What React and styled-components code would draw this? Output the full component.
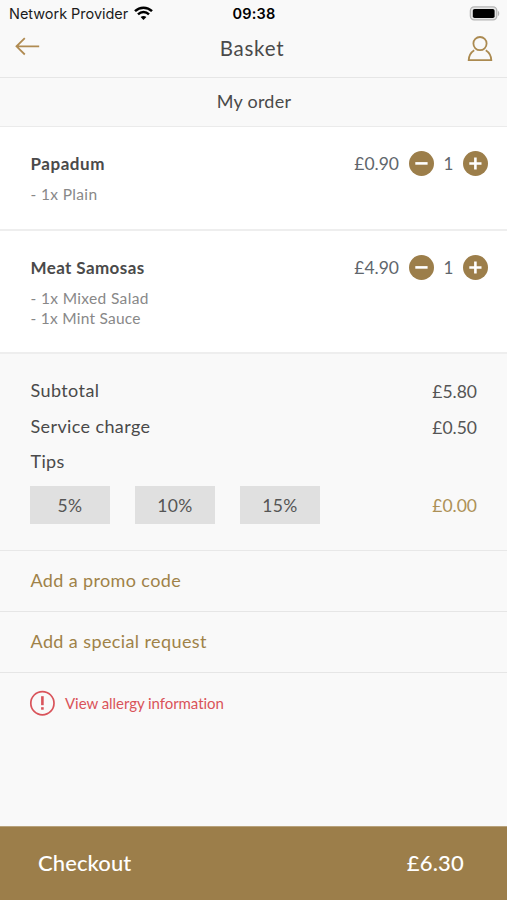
import React, { useState } from 'react';
import styled, { createGlobalStyle } from 'styled-components';

const GlobalStyle = createGlobalStyle`
  * {
    box-sizing: border-box;
  }

  body {
    margin: 0;
    background: #f9f9f9;
    font-family: Lato, 'Open Sans', sans-serif;
    font-variant-ligatures: none;
    color: #4a4a4a;
  }

  button {
    border: none;
    padding: 0;
    background: none;
    font-family: inherit;
    font-variant-ligatures: none;
    color: inherit;
    cursor: pointer;
  }
`;

const Screen = styled.div`
  display: flex;
  flex-direction: column;
  width: 507px;
  height: 900px;
  overflow: hidden;
  background: #f9f9f9;
`;

const StatusBar = styled.div`
  display: grid;
  grid-template-columns: 1fr auto 1fr;
  align-items: center;
  height: 27px;
  padding: 0 7px 0 9px;
  font-family: Inter, sans-serif;
  color: #1c1c1c;
`;

const Carrier = styled.div`
  display: flex;
  align-items: center;
  gap: 6px;
  font-size: 14.5px;
  letter-spacing: -0.03px;
  white-space: nowrap;
`;

const Clock = styled.div`
  padding-right: 1px;
  font-size: 14.5px;
  font-weight: 600;
  letter-spacing: 0.2px;
  color: #000;
`;

const Battery = styled.svg`
  justify-self: end;
`;

const Header = styled.header`
  display: grid;
  grid-template-columns: 40px 1fr 40px;
  align-items: center;
  height: 51px;
  padding: 0 14px 9px 14px;
  border-bottom: 1px solid #e6e6e6;
`;

const Title = styled.h1`
  margin: 0;
  padding-right: 3px;
  font-size: 20.5px;
  font-weight: 400;
  line-height: 26px;
  letter-spacing: 0.75px;
  text-align: center;
`;

const IconButton = styled.button`
  display: flex;
  justify-content: ${props => props.$align || 'flex-start'};
  padding-bottom: ${props => props.$lift || 0}px;
`;

const SectionTitle = styled.h2`
  height: 49px;
  margin: 0;
  padding-left: 1px;
  border-bottom: 1px solid #ebebeb;
  font-size: 18px;
  font-weight: 400;
  line-height: 46px;
  letter-spacing: 0.25px;
  text-align: center;
`;

const OrderItem = styled.div`
  display: flex;
  justify-content: space-between;
  align-items: flex-start;
  height: ${props => props.$height}px;
  padding: 24px 19px 0 30.5px;
  background: #fff;
  border-bottom: 2px solid #eee;
`;

const ItemName = styled.div`
  font-size: 17px;
  font-weight: 700;
  line-height: 26px;
  letter-spacing: ${props => props.$spacing}px;
`;

const ItemOptions = styled.div`
  margin-top: 8px;
  font-size: 15.5px;
  line-height: 19.5px;
  color: #888;
`;

const Option = styled.div`
  letter-spacing: ${props => props.$spacing}px;
`;

const Stepper = styled.div`
  display: flex;
  align-items: center;
  height: 25px;
`;

const ItemPrice = styled.span`
  margin-right: 10px;
  font-size: 17.5px;
  color: #60666c;
`;

const Quantity = styled.span`
  width: 29px;
  font-size: 17px;
  text-align: center;
  color: #60666c;
`;

const RoundButton = styled.button`
  display: flex;
  width: 25px;
  height: 25px;
  border-radius: 50%;
  background: #9c7e4a;
`;

const Summary = styled.section`
  height: 197px;
  padding: 19px 30px 0;
  border-bottom: 1px solid #e8e8e8;
`;

const SummaryRow = styled.div`
  display: flex;
  justify-content: space-between;
  height: 35.5px;
  font-size: 18px;
  line-height: 35px;
`;

const Label = styled.span`
  padding-left: 0.5px;
  letter-spacing: ${props => props.$spacing}px;
`;

const Amount = styled.span`
  padding-top: ${props => props.$drop || 0}px;
  font-size: 17.5px;
  color: ${props => (props.$accent ? '#ad9157' : '#555')};
`;

const TipsRow = styled.div`
  display: flex;
  align-items: center;
  justify-content: space-between;
  margin-top: 6px;
`;

const TipOptions = styled.div`
  display: flex;
  gap: 25px;
`;

const TipButton = styled.button`
  width: 80px;
  height: 38px;
  padding-top: 1px;
  background: ${props => (props.$active ? '#cfc1a4' : '#e0e0e0')};
  font-size: 17.5px;
  letter-spacing: 0.4px;
  color: #555;
`;

const LinkRow = styled.button`
  height: 61px;
  padding: 0 30.5px 3px;
  border-bottom: 1px solid #e6e6e6;
  font-size: 18px;
  letter-spacing: ${props => props.$spacing}px;
  text-align: left;
  color: #9f8248;
`;

const AllergyLink = styled.button`
  display: flex;
  align-items: center;
  align-self: flex-start;
  gap: 10px;
  margin: 17px 0 0 29px;
  font-size: 15px;
  letter-spacing: -0.05px;
  color: #d9535a;
`;

const Checkout = styled.button`
  display: flex;
  justify-content: space-between;
  align-items: center;
  height: 74px;
  margin-top: auto;
  padding: 0 43px 2px 38px;
  border-top: 1px solid #b8a27c;
  background: #9c7e4a;
  font-size: 22px;
  font-weight: 500;
  color: #fff;
`;

const CheckoutText = styled.span`
  letter-spacing: ${props => props.$spacing}px;
`;

const WifiIcon = () => (
  <svg width="19" height="15" viewBox="0 0 19 15">
    <path d="M1 5.1C5.8.5 13.2.5 18 5.1" fill="none" stroke="#000" strokeWidth="2.5" />
    <path d="M4 8.3C7.2 5.3 11.8 5.3 15 8.3" fill="none" stroke="#000" strokeWidth="2.5" />
    <path d="M6.6 11C8.3 9.5 10.7 9.5 12.4 11L9.5 14Z" fill="#000" />
  </svg>
);

const BatteryIcon = () => (
  <Battery width="31" height="15" viewBox="0 0 31 15">
    <rect x="1.4" y="0.9" width="26.4" height="13" rx="3.8" fill="#e6e6e6" stroke="#b5b5b5" strokeWidth="1.3" />
    <rect x="3.8" y="3" width="21.8" height="9" rx="1.8" fill="#000" />
    <path d="M29 5C30.7 5.6 30.7 9.4 29 10Z" fill="#b5b5b5" />
  </Battery>
);

const BackIcon = () => (
  <svg width="26" height="20" viewBox="0 0 26 20" fill="none" stroke="#b08b52" strokeWidth="1.8">
    <path d="M25.2 10.3H2.5M10.8 2.1L2.5 10.3L10.8 18.5" />
  </svg>
);

const UserIcon = () => (
  <svg width="26" height="27" viewBox="0 0 26 27" fill="none" stroke="#ab8a50" strokeWidth="1.8">
    <circle cx="13" cy="9.6" r="6.6" />
    <path d="M7.2 16.3C4 18.4 1.9 21.7 1.7 26.1H24.3C24.1 21.7 22 18.4 18.8 16.3" />
  </svg>
);

const MinusIcon = () => (
  <svg width="25" height="25" viewBox="0 0 25 25" stroke="#fff" strokeWidth="2.6">
    <path d="M6.3 12.4H18.6" />
  </svg>
);

const PlusIcon = () => (
  <svg width="25" height="25" viewBox="0 0 25 25" stroke="#fff" strokeWidth="2.6">
    <path d="M6.3 12.5H18.5M12.4 6.4V18.6" />
  </svg>
);

const AlertIcon = () => (
  <svg width="26" height="26" viewBox="0 0 26 26" fill="none" stroke="#d9535a">
    <circle cx="13.4" cy="13.2" r="11.6" strokeWidth="1.7" />
    <path d="M13.4 6.2V15.2" strokeWidth="2.6" />
    <path d="M13.4 17.2V19.7" strokeWidth="2.6" />
  </svg>
);

const items = [
  { name: 'Papadum', price: 0.9, height: 104, spacing: 0.55, options: [{ text: '- 1x Plain', spacing: 0.35 }] },
  {
    name: 'Meat Samosas',
    price: 4.9,
    height: 123,
    spacing: 0.4,
    options: [
      { text: '- 1x Mixed Salad', spacing: 0.35 },
      { text: '- 1x Mint Sauce', spacing: 0.25 }
    ]
  }
];

const SERVICE_CHARGE = 0.5;

const formatPrice = value => `£${value.toFixed(2)}`;

const App = () => {
  const [quantities, setQuantities] = useState([1, 1]);
  const [tip, setTip] = useState(0);

  const subtotal = items.reduce((sum, item, i) => sum + item.price * quantities[i], 0);
  const tipAmount = (subtotal * tip) / 100;

  const changeQuantity = (index, step) => {
    setQuantities(quantities.map((q, i) => (i === index ? Math.max(0, q + step) : q)));
  };

  return (
    <Screen>
      <GlobalStyle />
      <StatusBar>
        <Carrier>
          Network Provider
          <WifiIcon />
        </Carrier>
        <Clock>09:38</Clock>
        <BatteryIcon />
      </StatusBar>
      <Header>
        <IconButton $lift={3} aria-label="Back">
          <BackIcon />
        </IconButton>
        <Title>Basket</Title>
        <IconButton $align="flex-end" aria-label="Account">
          <UserIcon />
        </IconButton>
      </Header>
      <SectionTitle>My order</SectionTitle>

      {items.map((item, index) => (
        <OrderItem key={item.name} $height={item.height}>
          <div>
            <ItemName $spacing={item.spacing}>{item.name}</ItemName>
            <ItemOptions>
              {item.options.map(option => (
                <Option key={option.text} $spacing={option.spacing}>{option.text}</Option>
              ))}
            </ItemOptions>
          </div>
          <Stepper>
            <ItemPrice>{formatPrice(item.price)}</ItemPrice>
            <RoundButton aria-label="Remove one" onClick={() => changeQuantity(index, -1)}>
              <MinusIcon />
            </RoundButton>
            <Quantity>{quantities[index]}</Quantity>
            <RoundButton aria-label="Add one" onClick={() => changeQuantity(index, 1)}>
              <PlusIcon />
            </RoundButton>
          </Stepper>
        </OrderItem>
      ))}

      <Summary>
        <SummaryRow>
          <Label $spacing={0.4}>Subtotal</Label>
          <Amount $drop={1}>{formatPrice(subtotal)}</Amount>
        </SummaryRow>
        <SummaryRow>
          <Label $spacing={0.38}>Service charge</Label>
          <Amount $drop={1}>{formatPrice(SERVICE_CHARGE)}</Amount>
        </SummaryRow>
        <SummaryRow>
          <Label $spacing={0.35}>Tips</Label>
        </SummaryRow>
        <TipsRow>
          <TipOptions>
            {[5, 10, 15].map(value => (
              <TipButton
                key={value}
                $active={tip === value}
                onClick={() => setTip(tip === value ? 0 : value)}
              >
                {value}%
              </TipButton>
            ))}
          </TipOptions>
          <Amount $accent $drop={1}>{formatPrice(tipAmount)}</Amount>
        </TipsRow>
      </Summary>

      <LinkRow $spacing={0.37}>Add a promo code</LinkRow>
      <LinkRow $spacing={0.4}>Add a special request</LinkRow>
      <AllergyLink>
        <AlertIcon />
        View allergy information
      </AllergyLink>

      <Checkout>
        <CheckoutText $spacing={0.1}>Checkout</CheckoutText>
        <CheckoutText $spacing={0.2}>{formatPrice(subtotal + SERVICE_CHARGE + tipAmount)}</CheckoutText>
      </Checkout>
    </Screen>
  );
};

export default App;
